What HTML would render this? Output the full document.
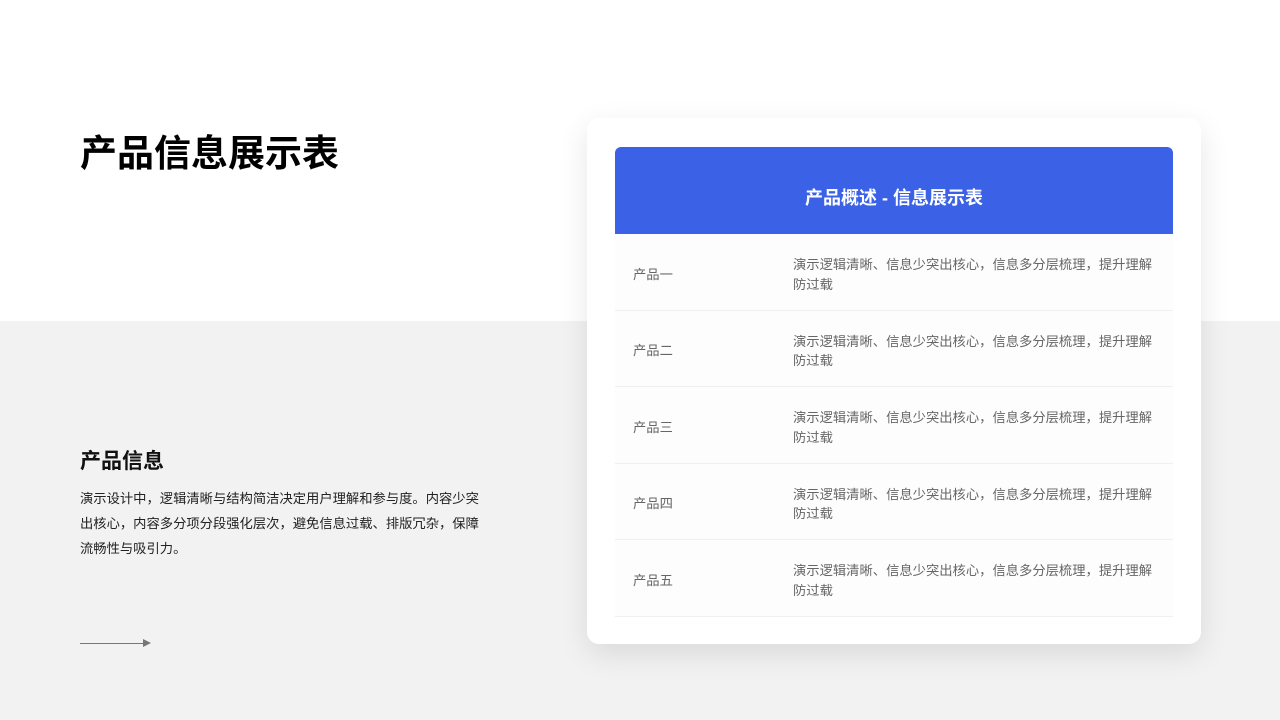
<!DOCTYPE html>
<html><head><meta charset="utf-8"><style>
*{margin:0;padding:0;box-sizing:border-box}
body{width:1280px;height:720px;position:relative;overflow:hidden;background:#fff;font-family:"Liberation Sans","Noto Sans CJK SC",sans-serif}
.bot{position:absolute;left:0;top:321px;width:1280px;height:399px;background:#f2f2f2}
h1{position:absolute;left:80px;top:132px;font-size:37px;font-weight:700;color:#000;line-height:44px}
h2{position:absolute;left:80px;top:449px;font-size:21px;font-weight:700;color:#111;line-height:26px}
.p{position:absolute;left:80px;top:486px;width:410px;font-size:13.3px;line-height:25px;color:#222}
.arrow{position:absolute;left:80px;top:643px;width:64px;height:1px;background:#777}
.arrow:after{content:"";position:absolute;right:-7px;top:-4px;border-left:8px solid #777;border-top:4.5px solid transparent;border-bottom:4.5px solid transparent}
.card{position:absolute;left:587px;top:118px;width:614px;height:526px;background:#fff;border-radius:12px;box-shadow:0 10px 30px rgba(0,0,0,0.10)}
.head{position:absolute;left:28px;top:29px;width:558px;height:87px;background:#3b62e6;border-radius:6px 6px 0 0;color:#fff;font-size:18px;font-weight:700;text-align:center;padding-top:39px;line-height:24px}
.row{position:absolute;left:28px;width:558px;height:76.5px;border-bottom:1px solid #f0f0f0;background:#fdfdfd;font-size:13.3px;color:#666}
.c1{position:absolute;left:18px;top:1px;height:76px;display:flex;align-items:center}
.c2{position:absolute;left:178px;top:21px;width:366px;line-height:19.5px}
</style></head><body>
<div class="bot"></div>
<h1>产品信息展示表</h1>
<h2>产品信息</h2>
<div class="p">演示设计中，逻辑清晰与结构简洁决定用户理解和参与度。内容少突<br>出核心，内容多分项分段强化层次，避免信息过载、排版冗杂，保障<br>流畅性与吸引力。</div>
<div class="arrow"></div>
<div class="card">
<div class="head">产品概述 - 信息展示表</div>
<div class="row" style="top:116px"><div class="c1">产品一</div><div class="c2">演示逻辑清晰、信息少突出核心，信息多分层梳理，提升理解<br>防过载</div></div>
<div class="row" style="top:192.5px"><div class="c1">产品二</div><div class="c2">演示逻辑清晰、信息少突出核心，信息多分层梳理，提升理解<br>防过载</div></div>
<div class="row" style="top:269px"><div class="c1">产品三</div><div class="c2">演示逻辑清晰、信息少突出核心，信息多分层梳理，提升理解<br>防过载</div></div>
<div class="row" style="top:345.5px"><div class="c1">产品四</div><div class="c2">演示逻辑清晰、信息少突出核心，信息多分层梳理，提升理解<br>防过载</div></div>
<div class="row" style="top:422px"><div class="c1">产品五</div><div class="c2">演示逻辑清晰、信息少突出核心，信息多分层梳理，提升理解<br>防过载</div></div>
</div>
</body></html>
